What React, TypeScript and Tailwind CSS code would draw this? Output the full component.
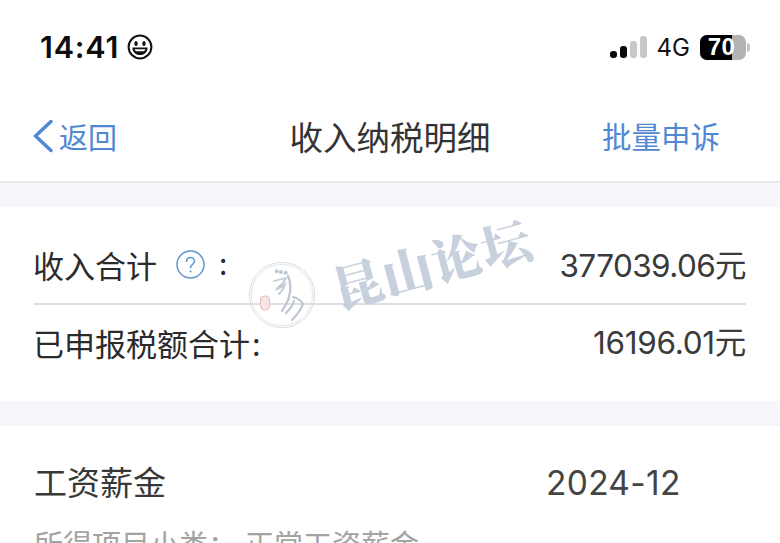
const cjk = "font-['Noto_Sans_CJK_SC','Noto_Sans',sans-serif]";

function Smile() {
  return (
    <svg width="26" height="26" viewBox="0 0 26 26" fill="none">
      <circle cx="13" cy="13" r="11.4" stroke="#111" strokeWidth="2" />
      <ellipse cx="9" cy="9.6" rx="1.7" ry="2.5" fill="#111" />
      <ellipse cx="17" cy="9.6" rx="1.7" ry="2.5" fill="#111" />
      <path d="M5.4 13.4h15.2c0 4.6-3.2 7.6-7.6 7.6s-7.6-3-7.6-7.6z" fill="#111" />
      <path d="M7.6 15.2h10.8c-.5 1.2-1 1.7-1.6 2.1H9.2c-.6-.4-1.2-.9-1.6-2.1z" fill="#fff" />
    </svg>
  );
}

function Signal() {
  return (
    <div className="flex items-end gap-[3px]">
      <div className="w-[7px] h-[7px] rounded-[3px] bg-[#0a0a0a]" />
      <div className="w-[7px] h-[12px] rounded-[3px] bg-[#0a0a0a]" />
      <div className="w-[7px] h-[17px] rounded-[3px] bg-[#c8c8c8]" />
      <div className="w-[7px] h-[22px] rounded-[3px] bg-[#c8c8c8]" />
    </div>
  );
}

function Battery() {
  return (
    <div className="flex items-center gap-[1px]">
      <div className="relative w-[46px] h-[25px] rounded-[7px] bg-[#b3b3b3] overflow-hidden">
        <div className="h-full w-[32px] bg-black" />
        <div className="absolute inset-0 flex items-center justify-center font-['Liberation_Sans',sans-serif] font-bold text-[24px] leading-none tracking-[0.5px] text-white pr-[3px]">
          70
        </div>
      </div>
      <div className="w-[3px] h-[9px] rounded-r-[3px] bg-[#c4c4c4]" />
    </div>
  );
}

function Watermark() {
  return (
    <div className="absolute left-[248px] top-[215px] w-[300px] h-[125px] pointer-events-none">
      <svg className="absolute left-0 top-[46px]" width="68" height="68" viewBox="0 0 68 68" fill="none">
        <circle cx="34" cy="34" r="32.6" stroke="#d8dce1" strokeWidth="1" />
        <circle cx="34" cy="34" r="30.6" stroke="#e4e7ea" strokeWidth="1" />
        <circle cx="28.7" cy="10.300" r="2" fill="#bcc6d1" />
        <circle cx="33" cy="11" r="2" fill="#bcc6d1" />
        <circle cx="37.700" cy="11.700" r="2" fill="#bcc6d1" />
        <path d="M26 20c4-1 8-2 12-3-2 5-7 8-10 12 4-2 7-4 9-6-1 4-3 7-6 10" stroke="#c2ccd7" strokeWidth="1.800" strokeLinecap="round" />
        <path d="M40 15c3 7 3 14 1 21-1 5-4 9-7 14" stroke="#bcc6d1" strokeWidth="2.200" strokeLinecap="round" />
        <path d="M45 36c4 1 8 3 10 7-2 6-6 11-11 16M46 40c-1 4-4 8-8 12" stroke="#bcc6d1" strokeWidth="2.200" strokeLinecap="round" />
        <rect x="12.500" y="35" width="9" height="14" rx="4" fill="#f8e6e4" stroke="#e6b8b4" strokeWidth="1" />
      </svg>
      <div className="absolute left-[85px] top-[48px] -rotate-[15deg] origin-left font-['Noto_Serif_CJK_SC','Noto_Sans_CJK_SC',sans-serif] font-black text-[50px] leading-none tracking-[1px] text-[#c6d1dd] whitespace-nowrap">
        昆山论坛
      </div>
    </div>
  );
}

export default function App() {
  return (
    <div className={`relative w-[780px] h-[543px] overflow-hidden bg-[#f5f6fa] ${cjk}`}>
      <div className="flex flex-col h-full">
        <header className="bg-white h-[183px] border-b-2 border-[#e8e9ed] shrink-0 flex flex-col">
          <div className="flex items-center justify-between pl-[40px] pr-[30px] pt-[30px] h-[64px]">
            <div className="flex items-center gap-[8px]">
              <span className="font-['Inter',sans-serif] font-semibold text-[30.500px] leading-none tracking-[0.8px] text-[#0d0d0d]">14:41</span>
              <Smile />
            </div>
            <div className="flex items-center gap-[10px]">
              <Signal />
              <span className="font-['Inter',sans-serif] text-[24px] leading-none text-[#111] translate-y-[1px]">4G</span>
              <Battery />
            </div>
          </div>
          <nav className="grid grid-cols-[1fr_auto_1fr] items-center px-[32px] mt-[44px] h-[56px]">
            <div className="flex items-center gap-[4px] text-[#5088d4]">
              <svg width="23" height="34" viewBox="0 0 23 34" fill="none">
                <path d="M19 2.500 3.500 17 19 31.500" stroke="#5088d4" strokeWidth="3.500" strokeLinecap="round" strokeLinejoin="round" />
              </svg>
              <span className="text-[29px] leading-none">返回</span>
            </div>
            <h1 className="text-[33.500px] leading-none font-normal text-[#333]">收入纳税明细</h1>
            <span className="justify-self-end mr-[28px] text-[29.500px] leading-none text-[#5088d4]">批量申诉</span>
          </nav>
        </header>

        <section className="mt-[24px] bg-white h-[194px] shrink-0 px-[34px] flex flex-col">
          <div className="h-[98px] flex items-center justify-between border-b-2 border-[#dedfe1] pt-[19px]">
            <div className="flex items-center">
              <span className="-ml-[1px] text-[31px] leading-none text-[#2b2b2b]">收入合计</span>
              <svg className="ml-[19px]" width="29" height="29" viewBox="0 0 29 29" fill="none">
                <circle cx="14.500" cy="14.500" r="13.500" stroke="#5f93d0" strokeWidth="1.500" />
                <path d="M10.500 11.500c0-2.500 1.800-4 4-4s4 1.500 4 3.600c0 3.400-4 3.400-4 6.600" stroke="#5f93d0" strokeWidth="1.500" strokeLinecap="round" />
                <circle cx="14.500" cy="21.500" r="1" fill="#5f93d0" />
              </svg>
              <span className="ml-[14px] text-[30px] leading-none text-[#2b2b2b] -translate-y-[3px]">:</span>
            </div>
            <span className="font-['Inter',sans-serif] text-[31.500px] leading-none text-[#3a3a3a] tracking-[-0.6px]">377039.06<span className={cjk}>元</span></span>
          </div>
          <div className="flex-1 flex items-center justify-between pb-[22px]">
            <span className="-ml-[1px] text-[31px] leading-none text-[#2b2b2b]">已申报税额合计<span className="ml-[2px]">:</span></span>
            <span className="font-['Inter',sans-serif] text-[31.500px] leading-none text-[#3a3a3a] tracking-[-0.3px]">16196.01<span className={cjk}>元</span></span>
          </div>
        </section>

        <section className="mt-[25px] bg-white flex-1 pl-[34px] pt-[33px]">
          <div className="flex items-center">
            <span className="w-[512px] text-[33px] leading-[44px] text-[#383838]">工资薪金</span>
            <span className="translate-y-[2px] font-['Inter',sans-serif] text-[33.500px] leading-[44px] tracking-[0.3px] text-[#444]">2024-12</span>
          </div>
          <div className="mt-[20px] text-[29px] leading-[40px] text-[#a3a3a3] whitespace-nowrap">所得项目小类：<span className="ml-[8px]">正常工资薪金</span></div>
        </section>
      </div>
      <Watermark />
    </div>
  );
}
